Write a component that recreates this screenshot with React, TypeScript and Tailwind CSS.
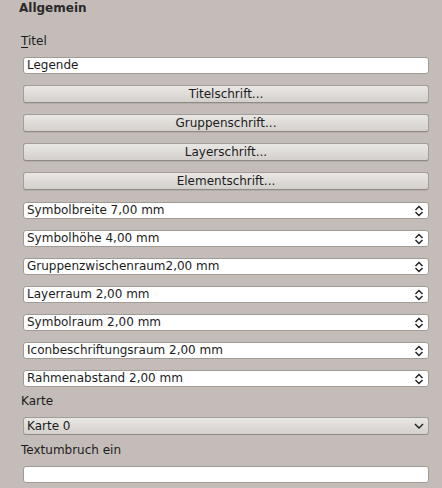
import React from 'react';

const spins = [
  'Symbolbreite 7,00 mm',
  'Symbolhöhe 4,00 mm',
  'Gruppenzwischenraum2,00 mm',
  'Layerraum 2,00 mm',
  'Symbolraum 2,00 mm',
  'Iconbeschriftungsraum 2,00 mm',
  'Rahmenabstand 2,00 mm',
];

const buttons = ['Titelschrift...', 'Gruppenschrift...', 'Layerschrift...', 'Elementschrift...'];

const SpinArrows = () => (
  <svg width="10" height="12" viewBox="0 0 10 12" className="shrink-0">
    <path d="M1.5 5 L5 1.5 L8.5 5" fill="none" stroke="#1e1e1e" strokeWidth="1.4" />
    <path d="M1.5 7 L5 10.5 L8.5 7" fill="none" stroke="#1e1e1e" strokeWidth="1.4" />
  </svg>
);

const DownArrow = () => (
  <svg width="10" height="6" viewBox="0 0 10 6" className="shrink-0">
    <path d="M1 1 L5 5 L9 1" fill="none" stroke="#1e1e1e" strokeWidth="1.4" />
  </svg>
);

export default function App() {
  return (
    <div className="w-[442px] h-[488px] overflow-hidden bg-[#c4bcb8] text-[12px] text-[#1c1c1c] font-['DejaVu_Sans',sans-serif]">
      <div className="flex flex-col pl-[23px] pr-[13px] pt-[1px]">
        <div className="-ml-[4px] h-[15px] leading-[15px] font-bold text-[#2a2a2a]">Allgemein</div>

        <div className="-ml-[2px] mt-[18px] h-[15px] leading-[15px]">
          <span className="underline underline-offset-2">T</span>itel
        </div>
        <div className="mt-[8px] h-[17px] rounded-[3px] border border-[#a19b96] bg-white pl-[3px] leading-[15px]">
          Legende
        </div>

        <div className="mt-[11px] flex flex-col gap-[11px]">
          {buttons.map((b) => (
            <div
              key={b}
              className="h-[18px] rounded-[3px] border border-[#a29d98] border-b-[#8f8a85] bg-gradient-to-b from-[#e9e7e4] to-[#d4d0cc] text-center leading-[16px] shadow-[0_1px_0_rgba(0,0,0,0.08)]"
            >
              {b}
            </div>
          ))}
        </div>

        <div className="mt-[12px] flex flex-col gap-[11px]">
          {spins.map((s) => (
            <div
              key={s}
              className="flex h-[17px] items-center justify-between rounded-[3px] border border-[#a19b96] bg-white pl-[3px] pr-[4px]"
            >
              <span className="leading-[15px]">{s}</span>
              <SpinArrows />
            </div>
          ))}
        </div>

        <div className="-ml-[2px] mt-[7px] h-[15px] leading-[15px]">Karte</div>
        <div className="mt-[8px] flex h-[18px] items-center justify-between rounded-[3px] border border-[#a29d98] border-b-[#8f8a85] bg-gradient-to-b from-[#e9e7e4] to-[#d4d0cc] pl-[3px] pr-[4px]">
          <span className="leading-[16px]">Karte 0</span>
          <DownArrow />
        </div>

        <div className="-ml-[2px] mt-[8px] h-[15px] leading-[15px]">Textumbruch ein</div>
        <div className="mt-[8px] h-[17px] rounded-[3px] border border-[#a19b96] bg-white" />
      </div>
    </div>
  );
}
